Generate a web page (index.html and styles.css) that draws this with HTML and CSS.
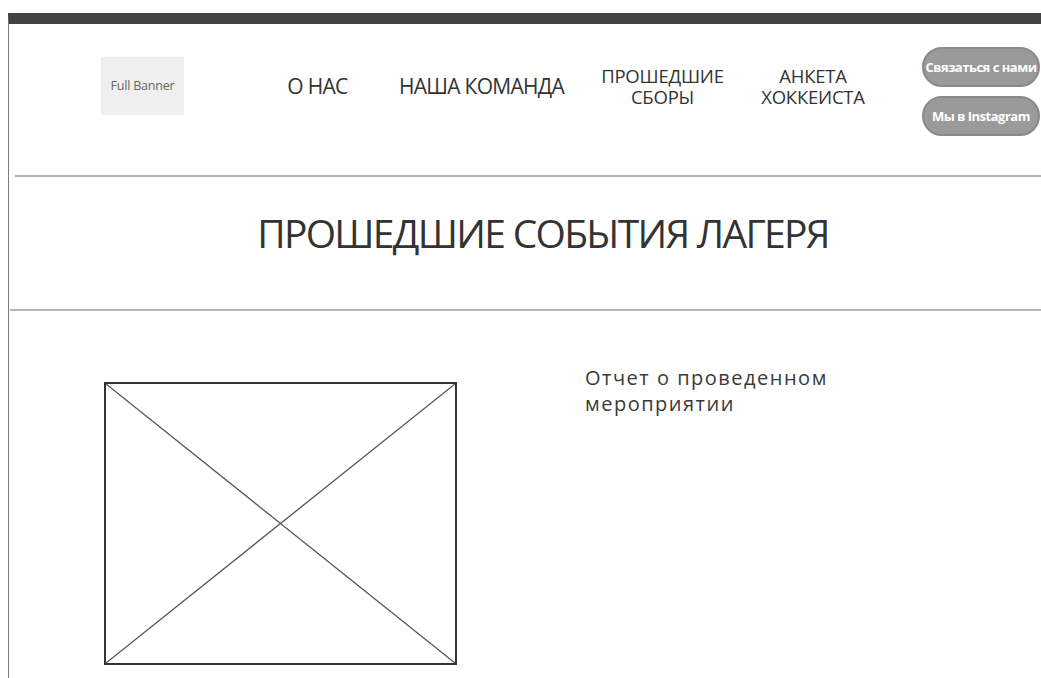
FILE: index.html
```html
<!DOCTYPE html>
<html lang="ru">
<head>
<meta charset="utf-8">
<title>Прошедшие события лагеря</title>
<link rel="stylesheet" href="styles.css">
</head>
<body>
<div class="page">
  <header class="header">
    <div class="logo">Full Banner</div>
    <nav class="nav">
      <a class="nav-item nav-about">О НАС</a>
      <a class="nav-item nav-team">НАША КОМАНДА</a>
      <a class="nav-item nav-past nav-small">ПРОШЕДШИЕ<br>СБОРЫ</a>
      <a class="nav-item nav-form nav-small">АНКЕТА<br>ХОККЕИСТА</a>
    </nav>
    <div class="actions">
      <a class="pill">Связаться с нами</a>
      <a class="pill">Мы в Instagram</a>
    </div>
  </header>
  <hr class="rule rule-top">
  <section class="title-band">
    <h1 class="title">ПРОШЕДШИЕ СОБЫТИЯ ЛАГЕРЯ</h1>
  </section>
  <hr class="rule rule-bottom">
  <section class="event">
    <div class="photo">
      <svg class="photo-x" viewBox="0 0 100 100" preserveAspectRatio="none">
        <line x1="0" y1="0" x2="100" y2="100" vector-effect="non-scaling-stroke"/>
        <line x1="100" y1="0" x2="0" y2="100" vector-effect="non-scaling-stroke"/>
      </svg>
    </div>
    <p class="event-text">Отчет о проведенном мероприятии</p>
  </section>
</div>
</body>
</html>
```
FILE: styles.css
```css
html, body {
  margin: 0;
  padding: 0;
  background: #fff;
  overflow: hidden;
}

body {
  font-family: "Open Sans", "Noto Sans", sans-serif;
  color: #333;
  height: 678px;
}

.page {
  margin: 13px 0 0 8px;
  border-top: 11px solid #424242;
  border-left: 1px solid #7a7a7a;
  height: 654px;
}

/* header row */
.header {
  box-sizing: border-box;
  display: flex;
  align-items: center;
  height: 151px;
  padding: 0 0 28px 92px;
}

.logo {
  width: 83px;
  height: 58px;
  background: #efefef;
  color: #666;
  font-size: 12.5px;
  letter-spacing: -0.2px;
  display: flex;
  align-items: center;
  justify-content: center;
  flex-shrink: 0;
}

.nav {
  display: flex;
  align-items: center;
  margin-left: 66px;
}

.nav-item {
  color: #333;
  text-decoration: none;
  text-align: center;
  font-size: 21px;
  letter-spacing: -0.7px;
  line-height: 22px;
  flex-shrink: 0;
}

.nav-small {
  font-size: 18.5px;
  letter-spacing: -0.2px;
  line-height: 21px;
}

.nav-about { width: 135px; }
.nav-team { width: 193px; }
.nav-past { width: 169px; }
.nav-form { width: 132px; }

.actions {
  display: flex;
  flex-direction: column;
  gap: 9px;
  margin-left: 43px;
  margin-top: 12px;
}

.pill {
  box-sizing: border-box;
  width: 118px;
  height: 40px;
  padding: 0 1px;
  border: 2px solid #8a8a8a;
  border-radius: 20px;
  background: #9a9a9a;
  color: #fff;
  font-weight: 700;
  font-size: 13px;
  line-height: 36px;
  letter-spacing: -0.5px;
  white-space: nowrap;
  text-align: center;
  text-decoration: none;
  overflow: hidden;
}

/* dividers */
.rule {
  margin: 0;
  border: 0;
  height: 0;
  border-top: 2px solid #b4b4b4;
}

.rule-top { margin-left: 6px; }
.rule-bottom { margin-left: 1px; }

/* page title */
.title-band {
  box-sizing: border-box;
  height: 132px;
  display: flex;
  align-items: center;
  justify-content: center;
  padding: 0 0 22px 36px;
}

.title {
  margin: 0;
  font-weight: 400;
  font-size: 39px;
  letter-spacing: -1.7px;
  color: #333;
}

/* event entry */
.event {
  display: flex;
  align-items: flex-start;
  padding: 54px 0 0 95px;
}

.photo {
  box-sizing: border-box;
  width: 353px;
  height: 283px;
  border: 2px solid #333;
  margin-top: 17px;
  flex-shrink: 0;
}

.photo-x {
  display: block;
  width: 100%;
  height: 100%;
}

.photo-x line {
  stroke: #555;
  stroke-width: 1.3;
}

.event-text {
  margin: 0 0 0 128px;
  width: 300px;
  font-size: 20px;
  line-height: 26px;
  letter-spacing: 1.5px;
  color: #3a3a3a;
}
```
